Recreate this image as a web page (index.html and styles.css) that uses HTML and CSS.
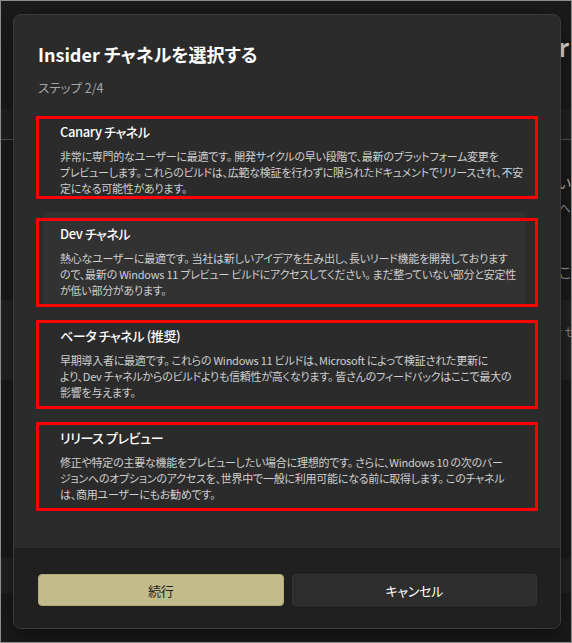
FILE: index.html
```html
<!DOCTYPE html>
<html lang="ja">
<head>
  <meta charset="UTF-8">
  <title>Insider チャネルを選択する</title>
  <meta name="viewport" content="width=device-width, initial-scale=1">
  <link rel="stylesheet" href="styles.css">
</head>
<body>
  <div class="screen">
    <div class="backdrop">
      <div class="page-head"><span class="page-title">r</span></div>
      <div class="page-band"></div>
      <div class="page-row">
        <div class="page-text">い</div>
        <div class="page-text page-text-small">へ</div>
        <div class="page-text page-text-low">こ</div>
      </div>
      <div class="page-row-alt">
        <div class="page-text page-text-cut">r せ</div>
      </div>
      <div class="page-rest"></div>
    </div>

    <div class="dialog">
      <div class="dialog-body">
        <h1>Insider チャネルを選択する</h1>
        <div class="step">ステップ 2/4</div>
        <ul class="channels">
          <li class="channel channel-first">
            <h3>Canary チャネル</h3>
            <p>非常に専門的なユーザーに最適です。 開発サイクルの早い段階で、最新のプラットフォーム変更を<br>プレビューします。 これらのビルドは、広範な検証を行わずに限られたドキュメントでリリースされ、不安<br>定になる可能性があります。</p>
          </li>
          <li class="channel hover">
            <h3>Dev チャネル</h3>
            <p>熱心なユーザーに最適です。 当社は新しいアイデアを生み出し、長いリード機能を開発しております<br>ので、最新の Windows 11 プレビュー ビルドにアクセスしてください。 まだ整っていない部分と安定性<br>が低い部分があります。</p>
          </li>
          <li class="channel">
            <h3>ベータ チャネル (推奨)</h3>
            <p>早期導入者に最適です。 これらの Windows 11 ビルドは、Microsoft によって検証された更新に<br>より、Dev チャネルからのビルドよりも信頼性が高くなります。 皆さんのフィードバックはここで最大の<br>影響を与えます。</p>
          </li>
          <li class="channel">
            <h3>リリース プレビュー</h3>
            <p>修正や特定の主要な機能をプレビューしたい場合に理想的です。 さらに、Windows 10 の次のバー<br>ジョンへのオプションのアクセスを、世界中で一般に利用可能になる前に取得します。 このチャネル<br>は、商用ユーザーにもお勧めです。</p>
          </li>
        </ul>
      </div>
      <div class="dialog-footer">
        <button class="btn btn-primary">続行</button>
        <button class="btn">キャンセル</button>
      </div>
    </div>
  </div>
</body>
</html>
```

FILE: styles.css
```css
body {
  margin: 0;
  font-family: "Noto Sans CJK JP", "Noto Sans", sans-serif;
  font-feature-settings: "palt" 1;
  background: #1b1b1b;
}
.screen {
  position: relative;
  width: 572px;
  height: 643px;
  border: 1px solid #8c8c8c;
  box-sizing: border-box;
  overflow: hidden;
  background: #1b1b1b;
}

/* settings page behind the dialog */
.backdrop {
  display: flex;
  flex-direction: column;
  height: 100%;
  white-space: nowrap;
  text-align: right;
}
.page-head {
  height: 108px;
  padding-right: 2px;
}
.page-title {
  display: inline-block;
  margin-top: 28px;
  font-size: 24px;
  font-weight: 600;
  color: #e8e8e8;
}
.page-band {
  height: 30px;
  background: #222;
  border-bottom: 1px solid #555;
}
.page-row {
  height: 160px;
  padding-top: 32px;
  box-sizing: border-box;
}
.page-text {
  font-size: 14px;
  line-height: 20px;
  color: #b8b8b8;
}
.page-text-small {
  margin-top: 6px;
  font-size: 12px;
  color: #9a9a9a;
}
.page-text-low {
  margin-top: 44px;
  color: #9a9a9a;
}
.page-row-alt {
  height: 80px;
  padding-top: 22px;
  box-sizing: border-box;
  background: #242424;
}
.page-text-cut {
  margin-right: -5px;
  font-size: 12px;
  color: #8c8c8c;
}
.page-rest {
  flex: 1;
}
.page-rest::before {
  content: "";
  display: block;
  height: 35px;
  margin-top: 178px;
  background: #232323;
}

/* dialog */
.dialog {
  position: absolute;
  left: 12px;
  top: 13px;
  width: 548px;
  height: 615px;
  box-sizing: border-box;
  display: flex;
  flex-direction: column;
  background: #2b2b2b;
  border: 1px solid #3b3b3b;
  border-radius: 8px;
  overflow: hidden;
  box-shadow: 0 8px 24px rgba(0,0,0,0.5);
}
.dialog-body {
  flex: 1;
}
.dialog h1 {
  margin: 0;
  padding: 25px 0 0 24px;
  font-size: 18px;
  line-height: 28px;
  font-weight: 600;
  color: #fff;
}
.step {
  margin-top: 10px;
  padding-left: 24px;
  font-size: 12.5px;
  line-height: 20px;
  color: #a6a6a6;
}
.channels {
  list-style: none;
  margin: 12px 0 0;
  padding: 0 34px 0 29px;
  display: flex;
  flex-direction: column;
  gap: 8px;
}
.channel {
  position: relative;
  height: 94px;
  box-sizing: border-box;
  padding: 11px 10px 0 17px;
  border-radius: 4px;
}
.channel::after {
  content: "";
  position: absolute;
  top: 6px;
  left: -7px;
  right: -12px;
  bottom: -1px;
  border: 3px solid #ff0000;
}
.channel-first::after {
  bottom: 5px;
}
.channel.hover {
  background: #323232;
}
.channel h3 {
  margin: 0;
  font-size: 13px;
  line-height: 22px;
  font-weight: 500;
  letter-spacing: -0.4px;
  color: #fff;
}
.channel p {
  margin: 5px 0 0;
  font-size: 11px;
  line-height: 16px;
  letter-spacing: -0.25px;
  color: #cfcfcf;
  white-space: nowrap;
}

.dialog-footer {
  height: 80px;
  box-sizing: border-box;
  padding: 25px 23px 0 24px;
  display: flex;
  gap: 8px;
  background: #202020;
  border-top: 1px solid #1d1d1d;
}
.btn {
  flex: 1;
  height: 32px;
  border: 1px solid #353535;
  border-radius: 4px;
  background: #2d2d2d;
  color: #fff;
  font-family: inherit;
  font-feature-settings: "palt" 1;
  font-size: 13px;
  letter-spacing: -0.3px;
}
.btn-primary {
  background: #c4bb8b;
  border-color: #b3aa78;
  color: #1d1d1d;
}
```
